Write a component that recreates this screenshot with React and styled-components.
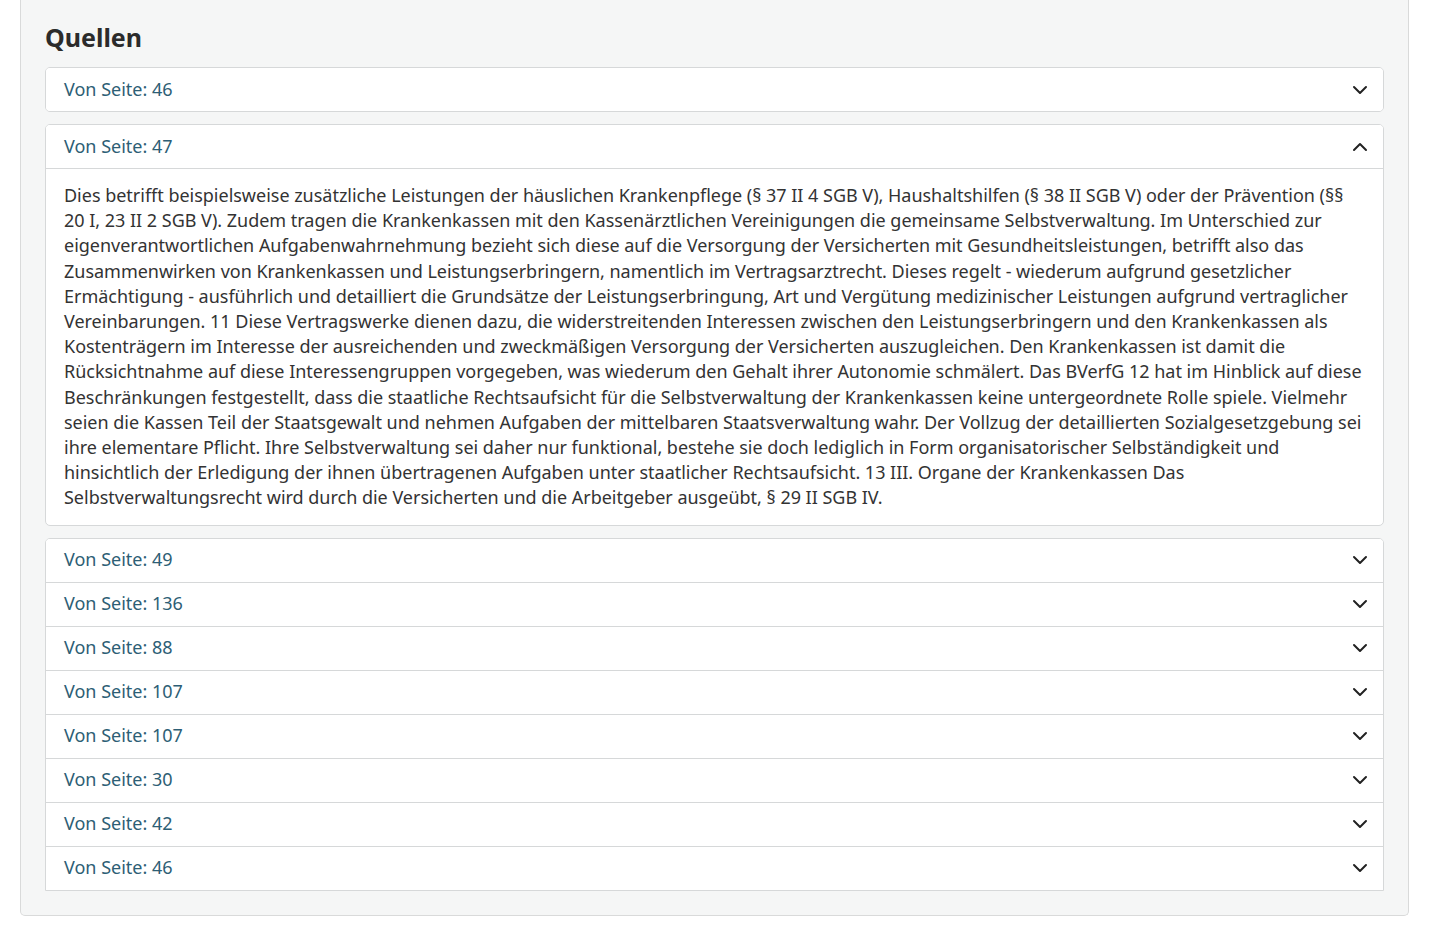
import React, { useState } from 'react';
import styled, { createGlobalStyle } from 'styled-components';

const GlobalStyle = createGlobalStyle`
  body {
    margin: 0;
    background: #fff;
    font-family: "Noto Sans", "Open Sans", sans-serif;
    color: #333;
  }
`;

const text = `Dies betrifft beispielsweise zusätzliche Leistungen der häuslichen Krankenpflege (§ 37 II 4 SGB V), Haushaltshilfen (§ 38 II SGB V) oder der Prävention (§§ 20 I, 23 II 2 SGB V). Zudem tragen die Krankenkassen mit den Kassenärztlichen Vereinigungen die gemeinsame Selbstverwaltung. Im Unterschied zur eigenverantwortlichen Aufgabenwahrnehmung bezieht sich diese auf die Versorgung der Versicherten mit Gesundheitsleistungen, betrifft also das Zusammenwirken von Krankenkassen und Leistungserbringern, namentlich im Vertragsarztrecht. Dieses regelt - wiederum aufgrund gesetzlicher Ermächtigung - ausführlich und detailliert die Grundsätze der Leistungserbringung, Art und Vergütung medizinischer Leistungen aufgrund vertraglicher Vereinbarungen. 11 Diese Vertragswerke dienen dazu, die widerstreitenden Interessen zwischen den Leistungserbringern und den Krankenkassen als Kostenträgern im Interesse der ausreichenden und zweckmäßigen Versorgung der Versicherten auszugleichen. Den Krankenkassen ist damit die Rücksichtnahme auf diese Interessengruppen vorgegeben, was wiederum den Gehalt ihrer Autonomie schmälert. Das BVerfG 12 hat im Hinblick auf diese Beschränkungen festgestellt, dass die staatliche Rechtsaufsicht für die Selbstverwaltung der Krankenkassen keine untergeordnete Rolle spiele. Vielmehr seien die Kassen Teil der Staatsgewalt und nehmen Aufgaben der mittelbaren Staatsverwaltung wahr. Der Vollzug der detaillierten Sozialgesetzgebung sei ihre elementare Pflicht. Ihre Selbstverwaltung sei daher nur funktional, bestehe sie doch lediglich in Form organisatorischer Selbständigkeit und hinsichtlich der Erledigung der ihnen übertragenen Aufgaben unter staatlicher Rechtsaufsicht. 13 III. Organe der Krankenkassen Das Selbstverwaltungsrecht wird durch die Versicherten und die Arbeitgeber ausgeübt, § 29 II SGB IV.`;

const groupPages = [49, 136, 88, 107, 107, 30, 42, 46];

function Chevron({ up }) {
  return (
    <svg width="16" height="16" viewBox="0 0 16 16" fill="none">
      <path
        d={up ? 'M2 11 L8 5 L14 11' : 'M2 5 L8 11 L14 5'}
        stroke="#222"
        strokeWidth="2"
        strokeLinecap="round"
        strokeLinejoin="round"
      />
    </svg>
  );
}

function Item({ page, body, defaultOpen }) {
  const [open, setOpen] = useState(!!defaultOpen);
  const expanded = open && !!body;
  return (
    <ItemBox>
      <Header type="button" $open={expanded} onClick={() => setOpen(!open)}>
        <Label>Von Seite: {page}</Label>
        <Chevron up={expanded} />
      </Header>
      {expanded && <Body>{body}</Body>}
    </ItemBox>
  );
}

export default function App() {
  return (
    <Page>
      <GlobalStyle />
      <Card>
        <Title>Quellen</Title>
        <Accordion>
          <Group>
            <Item page={46} />
          </Group>
          <Group>
            <Item page={47} body={text} defaultOpen />
          </Group>
          <Group $last>
            {groupPages.map((p, i) => (
              <Item key={i} page={p} />
            ))}
          </Group>
        </Accordion>
      </Card>
    </Page>
  );
}

const Page = styled.div`
  padding: 0 20px 20px;
`;

const Card = styled.section`
  background: #f5f6f6;
  border: 1px solid #d9dada;
  border-top: none;
  border-radius: 0 0 5px 5px;
  padding: 22px 24px 24px;
`;

const Title = styled.h2`
  margin: 0 0 14px;
  font-size: 25px;
  line-height: 31px;
  font-weight: 700;
  color: #2b2b2b;
`;

const Accordion = styled.div`
  display: flex;
  flex-direction: column;
  gap: 12px;
`;

const Group = styled.div`
  background: #fff;
  border: 1px solid #d6d8d9;
  border-radius: ${(p) => (p.$last ? '5px 5px 0 0' : '5px')};
  overflow: hidden;
`;

const ItemBox = styled.div`
  & + & {
    border-top: 1px solid #d6d8d9;
  }
`;

const Header = styled.button`
  display: flex;
  align-items: center;
  justify-content: space-between;
  box-sizing: border-box;
  width: 100%;
  height: ${(p) => (p.$open ? '44px' : '43px')};
  padding: 0 15px 0 18px;
  background: #fff;
  border: none;
  border-bottom: ${(p) => (p.$open ? '1px solid #d6d8d9' : 'none')};
  font-family: "Noto Sans", sans-serif;
  font-size: 18px;
  color: #2d5e75;
  cursor: pointer;
  text-align: left;
`;

const Label = styled.span`
  position: relative;
  top: -1px;
`;

const Body = styled.div`
  padding: 14px 18px 14px;
  font-size: 18px;
  line-height: 25.2px;
  letter-spacing: -0.015px;
  color: #333;
`;
